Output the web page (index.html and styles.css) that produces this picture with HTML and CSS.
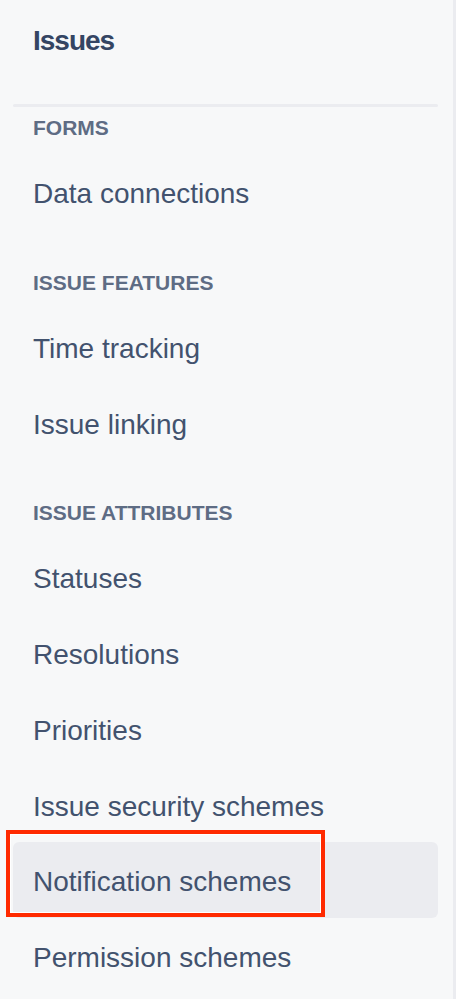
FILE: index.html
```html
<!DOCTYPE html>
<html lang="en">
<head>
<meta charset="utf-8">
<title>Issues</title>
<link rel="stylesheet" href="styles.css">
</head>
<body>
<nav class="sidebar">
  <h1 class="title">Issues</h1>
  <div class="divider"></div>
  <section class="section section-first">
    <h2 class="section-heading">Forms</h2>
    <a class="item">Data connections</a>
  </section>
  <section class="section">
    <h2 class="section-heading">Issue features</h2>
    <a class="item">Time tracking</a>
    <a class="item">Issue linking</a>
  </section>
  <section class="section">
    <h2 class="section-heading">Issue attributes</h2>
    <a class="item">Statuses</a>
    <a class="item">Resolutions</a>
    <a class="item">Priorities</a>
    <a class="item">Issue security schemes</a>
    <a class="item item-active">Notification schemes<span class="annotation"></span></a>
    <a class="item">Permission schemes</a>
  </section>
</nav>
</body>
</html>
```
FILE: styles.css
```css
html, body {
  margin: 0;
  padding: 0;
  background: #ffffff;
}
body {
  font-family: "Liberation Sans", Arial, sans-serif;
  height: 999px;
  overflow: hidden;
}
.sidebar {
  box-sizing: border-box;
  width: 456px;
  height: 999px;
  background: #f7f8f9;
  border-right: 3px solid #ebecf0;
  padding: 21px 15px 0 13px;
  display: flex;
  flex-direction: column;
}
.title {
  margin: 0 0 43px 20px;
  font-size: 28px;
  line-height: 40px;
  font-weight: 700;
  letter-spacing: -1px;
  color: #344563;
}
.divider {
  height: 3px;
  background: #ebecf0;
  border-radius: 2px;
}
.section {
  display: flex;
  flex-direction: column;
  margin-top: 41px;
}
.section-first {
  margin-top: 9px;
}
.section-heading {
  margin: 0 0 14px 20px;
  font-size: 21px;
  line-height: 24px;
  font-weight: 700;
  text-transform: uppercase;
  color: #5e6c84;
}
.item {
  position: relative;
  display: block;
  box-sizing: border-box;
  height: 75.75px;
  padding-top: 4px;
  line-height: 72px;
  padding-left: 20px;
  font-size: 28px;
  color: #42526e;
  border-radius: 6px;
  text-decoration: none;
}
.item-active {
  background: #ebecf0;
}
.annotation {
  position: absolute;
  box-sizing: border-box;
  left: -7px;
  top: -12px;
  width: 319px;
  height: 87px;
  border: 4px solid #ff2a00;
  box-shadow: inset 0 0 0 1px #ffffff;
  pointer-events: none;
}
```
